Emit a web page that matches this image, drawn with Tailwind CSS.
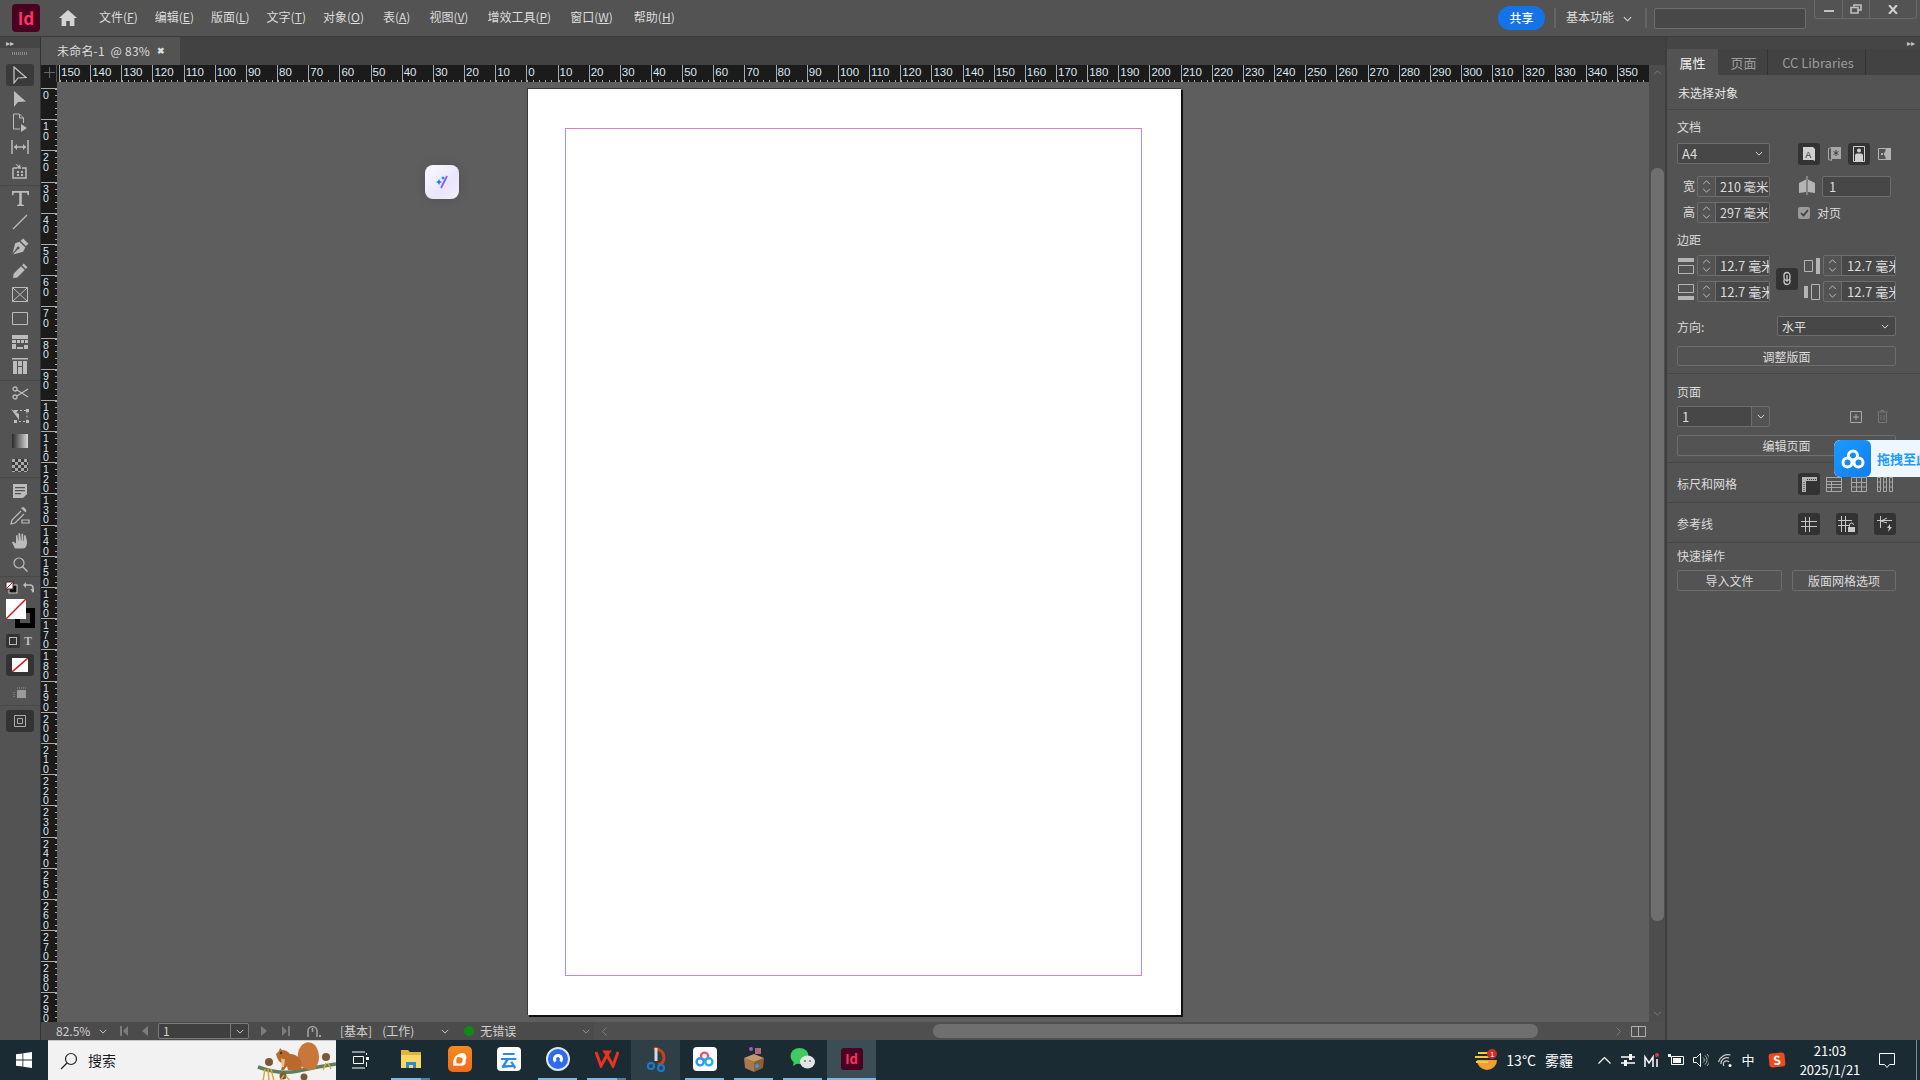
<!DOCTYPE html>
<html lang="zh-CN">
<head>
  <meta charset="UTF-8" />
  <title>InDesign</title>
  <script src="https://cdn.jsdelivr.net/npm/@tailwindcss/browser@4"></script>
</head>

<body class="flex h-[1080px] w-[1920px] flex-col overflow-hidden bg-[#535353] font-['Noto_Sans_CJK_SC',sans-serif] text-[12px] text-[#dcdcdc]">

  <!-- shared small icons -->
  <svg class="hidden">
    <symbol id="chev-d" viewBox="0 0 10 6"><path d="M1 1l4 4 4-4" fill="none" stroke="currentColor" stroke-width="1.2"/></symbol>
    <symbol id="chev-u" viewBox="0 0 10 6"><path d="M1 5l4-4 4 4" fill="none" stroke="currentColor" stroke-width="1.2"/></symbol>
  </svg>

  <!-- Barra de menu -->
  <header class="flex h-[37px] shrink-0 items-center border-b border-[#3a3a3a] bg-[#535353] pl-[12px] pr-[3px]">
    <div class="flex h-[28px] w-[28px] items-center justify-center rounded-[4px] bg-[#49021f] text-[17px] font-bold text-[#ff3366]">Id</div>
    <svg class="ml-[19px] h-[16px] w-[18px] text-[#d4d4d4]" viewBox="0 0 18 16"><path fill="currentColor" d="M9 0L0 8h2.6v8h4.6v-5h3.6v5h4.6V8H18z"/></svg>
    <nav class="ml-[22px] flex gap-[17px] whitespace-nowrap pb-[2px]">
      <span>文件(<u>F</u>)</span>
      <span>编辑(<u>E</u>)</span>
      <span>版面(<u>L</u>)</span>
      <span>文字(<u>T</u>)</span>
      <span>对象(<u>O</u>)</span>
      <span class="ml-[2px]">表(<u>A</u>)</span>
      <span class="ml-[2px]">视图(<u>V</u>)</span>
      <span class="ml-[2px]">增效工具(<u>P</u>)</span>
      <span class="ml-[2px]">窗口(<u>W</u>)</span>
      <span class="ml-[4px]">帮助(<u>H</u>)</span>
    </nav>
    <button class="ml-auto h-[24px] w-[47px] rounded-full bg-[#1473e6] text-[12px] font-medium text-white">共享</button>
    <div class="ml-[9px] h-[20px] w-[2px] bg-[#666]"></div>
    <span class="mb-[3px] ml-[10px]">基本功能</span>
    <svg class="ml-[9px] mt-[2px] h-[6px] w-[9px]"><use href="#chev-d"/></svg>
    <div class="ml-[13px] h-[20px] w-[2px] bg-[#666]"></div>
    <div class="ml-[7px] h-[21px] w-[152px] rounded-[2px] border border-[#6e6e6e] bg-[#484848]"></div>
    <div class="ml-[8px] flex h-[19px] self-start rounded-b-[3px] border border-t-0 border-[#6a6a6a]">
      <div class="flex w-[28px] items-center justify-center border-r border-[#6a6a6a]"><div class="mt-[4px] h-[2px] w-[10px] bg-[#c0c0c0]"></div></div>
      <div class="flex w-[27px] items-center justify-center border-r border-[#6a6a6a]">
        <svg class="h-[10px] w-[12px]" viewBox="0 0 12 10"><path fill="none" stroke="#c0c0c0" stroke-width="1.6" d="M4 2.5V1h7v5H8.500M1 3.500h7V9H1z"/></svg>
      </div>
      <div class="flex w-[46px] items-center justify-center">
        <svg class="h-[9px] w-[10px]" viewBox="0 0 10 9"><path stroke="#d0d0d0" stroke-width="2" d="M1 0l8 9M9 0L1 9"/></svg>
      </div>
    </div>
  </header>

  <div class="flex min-h-0 flex-1">

    <!-- Herramientas -->
    <aside class="flex w-[41px] shrink-0 flex-col border-r border-[#333] bg-[#535353] text-[#bcbcbc]">
      <div class="flex h-[11px] items-center bg-[#454545] pl-[6px] text-[8px] leading-none text-[#c4c4c4]">▸▸</div>
      <div class="mx-auto mt-[4px] h-[3px] w-[16px] bg-[repeating-linear-gradient(90deg,#8a8a8a_0,#8a8a8a_1px,transparent_1px,transparent_2px)]"></div>
      <div class="mt-[8px] flex flex-col items-center">
        <div class="flex h-[24px] w-full items-center justify-center"><div class="flex h-[22px] w-[28px] items-center justify-center rounded-[3px] bg-[#3a3a3a]">
          <svg class="h-[18px] w-[14px]" viewBox="0 0 14 18"><path fill="none" stroke="#c8c8c8" stroke-width="1.200" d="M1 1v16l4-5 8-.5z"/></svg></div></div>
        <div class="flex h-[24px] items-center"><svg class="h-[18px] w-[14px]" viewBox="0 0 14 18"><path fill="currentColor" d="M1 1v16l4-5 8-.5z"/></svg></div>
        <div class="flex h-[24px] items-center"><svg class="h-[20px] w-[16px]" viewBox="0 0 16 20"><path fill="none" stroke="currentColor" d="M1.500 1h6l4 4v5M7.500 1v4h4M8 16H1.500V1"/><path fill="currentColor" d="M9 11v8l6-4z"/></svg></div>
        <div class="flex h-[24px] items-center"><svg class="h-[14px] w-[18px]" viewBox="0 0 18 14"><path fill="none" stroke="currentColor" stroke-width="1.500" d="M1 0v14M17 0v14M3 7h12"/><path fill="currentColor" d="M3 7l3-3v6zM15 7l-3-3v6z"/></svg></div>
        <div class="flex h-[27px] w-full items-center justify-center border-b border-[#484848] pb-[2px]"><svg class="h-[18px] w-[18px]" viewBox="0 0 18 18"><path fill="none" stroke="currentColor" stroke-width="1.500" d="M2 6v10h13V6h-4M6 6H2"/><path fill="currentColor" d="M6 9h2v2H6zM10 9h2v2h-2zM6 12h2v2H6zM10 12h2v2h-2zM4 1l4 3 1-2 1 5-5-1 2-1z"/></svg></div>
        <div class="flex h-[24px] items-center"><svg class="h-[15px] w-[17px]" viewBox="0 0 16 14"><path fill="currentColor" d="M0 0h16v4h-1.200l-.6-2.400H9.200v10.800l2 .6v1H4.800v-1l2-.6V1.600H1.800L1.200 4H0z"/></svg></div>
        <div class="flex h-[24px] items-center"><svg class="h-[16px] w-[16px]" viewBox="0 0 16 16"><path stroke="currentColor" stroke-width="1.300" d="M1 15L15 1"/></svg></div>
        <div class="flex h-[24px] items-center"><svg class="h-[17px] w-[17px]" viewBox="0 0 16 16"><path fill="currentColor" d="M10.500.5l5 5-2.500 2-5-5zM7 3.500l5.500 5.500-2 4L1 15.500l4.500-5a1.300 1.300 0 10-1-1L.5 14.500 3 5z"/></svg></div>
        <div class="flex h-[24px] items-center"><svg class="h-[17px] w-[17px]" viewBox="0 0 16 16"><path fill="currentColor" d="M11 1.500l3.500 3.500-1.500 1.500L9.500 3zM8.500 4l3.500 3.500L5 14.500 1 15l.5-4z"/></svg></div>
        <div class="flex h-[24px] items-center"><svg class="h-[15px] w-[16px]" viewBox="0 0 16 15"><path fill="none" stroke="currentColor" d="M.5.500h15v14H.5zM.5.500l15 14M15.500.500l-15 14"/></svg></div>
        <div class="flex h-[24px] items-center"><svg class="h-[13px] w-[16px]" viewBox="0 0 16 13"><path fill="none" stroke="currentColor" d="M.5.500h15v12H.5z"/></svg></div>
        <div class="flex h-[24px] items-center"><svg class="h-[14px] w-[16px]" viewBox="0 0 16 14"><path fill="currentColor" d="M0 0h16v4H0zM0 5h4v3H0zM5 5h3v3H5zM9 5h3v3H9zM13 5h3v3h-3zM0 9h4v5H0zM12 10h4v4h-4zM5 12h6v2H5z"/></svg></div>
        <div class="flex h-[27px] w-full items-center justify-center border-b border-[#484848] pb-[3px]"><svg class="h-[16px] w-[16px]" viewBox="0 0 16 16"><path fill="currentColor" d="M0 0h16v1.500H0zM1 3h4v13H1zM6 3h4v5H6zM11 3h4v13h-4zM6 9h4v7H6z"/></svg></div>
        <div class="flex h-[24px] items-center"><svg class="h-[14px] w-[17px]" viewBox="0 0 17 14"><circle cx="3" cy="3" r="2" fill="none" stroke="currentColor" stroke-width="1.300"/><circle cx="3" cy="11" r="2" fill="none" stroke="currentColor" stroke-width="1.300"/><path stroke="currentColor" stroke-width="1.300" d="M5 4l11 7M5 10l11-7"/></svg></div>
        <div class="flex h-[24px] items-center"><svg class="h-[16px] w-[19px]" viewBox="0 0 19 16"><path fill="currentColor" d="M0 0l8 5v6z"/><path fill="none" stroke="currentColor" stroke-dasharray="2 2" d="M5 1.500h11v11H5"/><path fill="currentColor" d="M3 1h3v2H3zM15 0h3v3h-3zM15 11h3v3h-3zM3 11h3v3H3z"/></svg></div>
        <div class="flex h-[24px] items-center"><div class="h-[14px] w-[16px] bg-[linear-gradient(90deg,#2a2a2a,#d8d8d8)]"></div></div>
        <div class="flex h-[25px] w-full items-center justify-center border-b border-[#484848]"><div class="h-[13px] w-[16px] bg-[conic-gradient(#3a3a3a_25%,#aaa_0_50%,#3a3a3a_0_75%,#aaa_0)] bg-size-[6px_6px]"></div></div>
        <div class="flex h-[26px] items-center"><svg class="h-[14px] w-[15px]" viewBox="0 0 15 14"><path fill-rule="evenodd" fill="currentColor" d="M0 0h14v10l-4 4H0zM2 3v1.200h10V3zM2 6v1.200h10V6zM2 9v1.200h6V9z"/></svg></div>
        <div class="flex h-[24px] items-center"><svg class="h-[18px] w-[20px]" viewBox="0 0 20 18"><path fill="currentColor" d="M11 1l2.500-1 3 3-1 2.500z"/><path fill="none" stroke="currentColor" stroke-width="1.200" d="M11 4L2 13l-1 4 4-1 9-9M12 13h7v3h-7z"/></svg></div>
        <div class="flex h-[24px] items-center"><svg class="h-[17px] w-[16px]" viewBox="0 0 16 16"><path fill="currentColor" d="M3 16l-3-6 1-1 3 2V3l1.500-.500L6 8h.500V1l1.500-.500L9 8h.500V1.500L11 1l.5 7.500h.5V3l1.500-.500L15 9c0 4-1 7-4 7z"/></svg></div>
        <div class="flex h-[25px] w-full items-center justify-center border-b border-[#484848]"><svg class="h-[15px] w-[15px]" viewBox="0 0 15 15"><circle cx="6" cy="6" r="5" fill="none" stroke="currentColor" stroke-width="1.200"/><path stroke="currentColor" stroke-width="1.500" d="M9.500 9.500l5 5"/></svg></div>
      </div>
      <!-- Relleno y trazo -->
      <div class="mt-[4px] flex items-center pl-[5px]">
        <svg class="h-[13px] w-[13px]" viewBox="0 0 13 13"><rect x="4" y="4" width="8" height="8" fill="#111" stroke="#ccc"/><rect x="1" y="1" width="7" height="7" fill="#fff" stroke="#333"/><path stroke="#e11" d="M1 8l7-7"/></svg>
        <svg class="ml-[5px] h-[11px] w-[11px]" viewBox="0 0 11 11"><path fill="none" stroke="#bbb" stroke-width="1.500" d="M1 3h6a3 3 0 013 3v4"/><path fill="#bbb" d="M3 0v6L0 3zM7.500 7h5L10 11z"/></svg>
      </div>
      <svg class="ml-[6px] mt-[5px] h-[29px] w-[29px]" viewBox="0 0 29 29">
        <rect x="11.500" y="11.500" width="15" height="15" fill="none" stroke="#000" stroke-width="5"/>
        <rect width="20" height="20" fill="#fff"/><path stroke="#e01010" stroke-width="1.500" d="M0 20L20 0"/>
      </svg>
      <div class="mt-[2px] flex h-[22px] items-center pl-[6px]">
        <div class="flex h-[14px] w-[14px] items-center justify-center rounded-[2px] bg-[#333]"><div class="h-[8px] w-[8px] border border-[#bbb]"></div></div>
        <span class="ml-[4px] font-['Liberation_Serif',serif] text-[12px] font-bold leading-none text-[#bbb]">T</span>
      </div>
      <div class="mx-auto mt-[2px] flex h-[22px] w-[28px] items-center justify-center rounded-[3px] bg-[#333]">
        <svg class="h-[14px] w-[16px]" viewBox="0 0 16 14"><rect width="16" height="14" fill="#fff"/><path stroke="#e01010" stroke-width="1.500" d="M0 14L16 0"/></svg>
      </div>
      <div class="mt-[8px] flex h-[22px] items-center justify-center border-b border-[#484848] pb-[4px]">
        <svg class="h-[12px] w-[14px]" viewBox="0 0 14 12"><path fill="#9a9a9a" d="M4 3h9v8H4z"/><path stroke="#9a9a9a" stroke-dasharray="1 1" d="M4 1h9M1 5v6"/></svg>
      </div>
      <div class="mx-auto mt-[4px] flex h-[22px] w-[28px] items-center justify-center rounded-[3px] bg-[#333]">
        <svg class="h-[12px] w-[12px]" viewBox="0 0 12 12"><path fill="none" stroke="#aaa" d="M.5.500h11v11H.5zM3.500 3.500h5v5h-5z"/></svg>
      </div>
    </aside>

    <!-- Zona central -->
    <main class="flex min-w-0 flex-1 flex-col">
      <div class="flex h-[28px] shrink-0 bg-[#424242]">
        <div class="flex w-[139px] items-center justify-between bg-[#535353] pl-[16px] pr-[15px] tracking-[0.2px]">
          <span class="whitespace-pre">未命名-1  @ 83%</span>
          <span class="text-[9px] font-bold">✖</span>
        </div>
      </div>

      <div class="flex min-h-0 flex-1">
        <div class="flex min-w-0 flex-1 flex-col">
          <!-- Reglas -->
          <div class="flex h-[17px] shrink-0 bg-[#1b1b1b]">
            <div class="h-[17px] w-[16px] shrink-0 border-r border-[#555] bg-[linear-gradient(#666,#666),linear-gradient(#666,#666)] bg-size-[11px_1px,1px_11px] bg-position-[3px_7px,8px_2px] bg-no-repeat"></div>
            <div id="ruler-h" class="flex min-w-0 flex-1 overflow-hidden pl-[2px]"></div>
          </div>
          <div class="flex min-h-0 flex-1">
            <div id="ruler-v" class="flex w-[16px] shrink-0 flex-col overflow-hidden bg-[#1b1b1b] pt-[6px]"></div>
            <!-- Lienzo -->
            <div class="relative min-w-0 flex-1 overflow-hidden bg-[#5e5e5e]">
              <div class="ml-[470px] mt-[6px] h-[927px] w-[654px] border-l border-t border-[#3c3c3c] bg-white pl-[37px] pt-[39px] shadow-[2px_2px_0_#111]">
                <div class="h-[848px] w-[577px] border border-x-[#a096f0] border-y-[#d67fc6]"></div>
              </div>
              <div class="absolute left-[368px] top-[83px] flex h-[34px] w-[34px] items-center justify-center rounded-[8px] bg-[linear-gradient(135deg,#fbfbff,#e9e6fb_60%,#f6eef8)] shadow-[0_0_12px_rgba(0,0,0,0.12)]">
                <svg class="h-[14px] w-[14px]" viewBox="0 0 14 14"><path stroke="#8a5cf0" stroke-width="1.800" d="M12 1L6 13"/><path fill="#0a84ff" d="M4 4l1 2 2 1-2 1-1 2-1-2-2-1 2-1zM8 1l.7 1.300L10 3l-1.300.7L8 5l-.7-1.300L6 3l1.300-.7z"/></svg>
              </div>
            </div>
          </div>
        </div>
        <!-- Barra vertical -->
        <div class="flex w-[16px] shrink-0 flex-col items-center bg-[#4d4d4d] text-[#7c7c7c]">
          <svg class="mt-[5px] h-[5px] w-[9px]"><use href="#chev-u"/></svg>
          <div class="mt-[93px] h-[753px] w-[13px] rounded-[6px] bg-[#6f6f6f]"></div>
          <svg class="mb-[6px] mt-auto h-[5px] w-[9px]"><use href="#chev-d"/></svg>
        </div>
      </div>

      <!-- Barra de estado -->
      <div class="flex h-[18px] shrink-0 items-center bg-[#4b4b4b] text-[#cfcfcf]">
        <span class="ml-[15px] w-[37px]">82.5%</span>
        <svg class="ml-[6px] h-[5px] w-[8px]"><use href="#chev-d"/></svg>
        <svg class="ml-[13px] h-[10px] w-[8px] text-[#7c7c7c]" viewBox="0 0 8 10"><path fill="currentColor" d="M0 0h2v10H0zM8 0v10L3 5z"/></svg>
        <svg class="ml-[14px] h-[10px] w-[6px] text-[#7c7c7c]" viewBox="0 0 6 10"><path fill="currentColor" d="M6 0v10L0 5z"/></svg>
        <div class="ml-[10px] flex h-[16px] w-[91px] rounded-[2px] border border-[#7a7a7a] bg-[#3f3f3f]">
          <span class="flex-1 pl-[4px] leading-[14px]">1</span>
          <div class="flex w-[18px] items-center justify-center border-l border-[#7a7a7a]"><svg class="h-[5px] w-[8px]"><use href="#chev-d"/></svg></div>
        </div>
        <svg class="ml-[12px] h-[10px] w-[6px] text-[#7c7c7c]" viewBox="0 0 6 10"><path fill="currentColor" d="M0 0v10l6-5z"/></svg>
        <svg class="ml-[15px] h-[10px] w-[8px] text-[#7c7c7c]" viewBox="0 0 8 10"><path fill="currentColor" d="M6 0h2v10H6zM0 0v10l5-5z"/></svg>
        <svg class="ml-[17px] h-[12px] w-[14px] text-[#a0a0a0]" viewBox="0 0 14 12"><path fill="none" stroke="currentColor" stroke-width="1.600" d="M1 12V6a4.500 4.500 0 019 0v6M5.500 3v4"/><path fill="currentColor" d="M12 10h2v2h-2z"/></svg>
        <span class="ml-[19px] whitespace-nowrap">[基本]</span>
        <span class="ml-[10px] whitespace-nowrap">(工作)</span>
        <svg class="ml-[27px] h-[5px] w-[8px]"><use href="#chev-d"/></svg>
        <div class="ml-[15px] h-[10px] w-[10px] rounded-full bg-[#0e8a16]"></div>
        <span class="ml-[6px] whitespace-nowrap">无错误</span>
        <svg class="ml-[66px] h-[5px] w-[8px] text-[#9a9a9a]"><use href="#chev-d"/></svg>
        <!-- Barra horizontal -->
        <div class="ml-[4px] flex h-full flex-1 items-center bg-[#4f4f4f] text-[#7c7c7c]">
          <svg class="ml-[8px] h-[9px] w-[5px]" viewBox="0 0 5 9"><path fill="none" stroke="currentColor" d="M4.500.500L.500 4.500l4 4"/></svg>
          <div class="ml-[326px] h-[14px] w-[605px] rounded-[7px] bg-[#6f6f6f]"></div>
          <svg class="ml-[78px] h-[9px] w-[5px]" viewBox="0 0 5 9"><path fill="none" stroke="currentColor" d="M.500.500l4 4-4 4"/></svg>
          <svg class="ml-[10px] h-[11px] w-[15px] text-[#b0b0b0]" viewBox="0 0 15 11"><path fill="none" stroke="currentColor" d="M.5.500h14v10H.5zM7.500.500v10"/></svg>
        </div>
      </div>
    </main>

    <!-- Panel derecho -->
    <aside class="relative w-[255px] shrink-0 border-l-2 border-[#3e3e3e] bg-[#535353]">
      <div class="flex h-[12px] items-center justify-end bg-[#454545] pr-[5px] text-[8px] leading-none text-[#c4c4c4]">▸▸</div>
      <div class="flex h-[26px] bg-[#424242]">
        <div class="flex w-[51px] items-center justify-center bg-[#535353] pt-[2px] text-[13px] text-[#f0f0f0]">属性</div>
        <div class="flex w-[50px] items-center justify-center border-r border-[#333] pl-[2px] pt-[2px] text-[13px] text-[#9c9c9c]">页面</div>
        <div class="flex w-[98px] items-center justify-center border-r border-[#333] pl-[3px] pt-[2px] text-[13px] text-[#9c9c9c]">CC Libraries</div>
      </div>

      <div class="flex h-[35px] items-center border-b border-[#474747] pl-[11px] pt-[2px] text-[#e6e6e6]">未选择对象</div>

      <!-- Documento -->
      <section class="h-[264px] border-b border-[#474747] pl-[10px] pt-[9px]">
        <div class="h-[16px] leading-[16px]">文档</div>
        <div class="mt-[8px] flex items-start">
          <div class="flex h-[21px] w-[93px] items-center justify-between rounded-[2px] border border-[#6e6e6e] bg-[#474747] pl-[4px] pr-[6px] text-[13px]">A4<svg class="h-[5px] w-[8px]"><use href="#chev-d"/></svg></div>
          <div class="ml-[28px] flex gap-[3px]">
            <div class="flex h-[22px] w-[22px] items-center justify-center rounded-[3px] bg-[#333]"><svg class="h-[14px] w-[12px]" viewBox="0 0 12 14"><path fill="#d0d0d0" d="M0 0h10l2 2v12l-2-1H0z"/><text x="2.300" y="10.500" font-size="9" font-family="Liberation Sans" fill="#222">A</text></svg></div>
            <div class="flex h-[22px] w-[22px] items-center justify-center"><svg class="h-[14px] w-[13px]" viewBox="0 0 13 14"><path fill="#a6a6a6" d="M3 0h10v12H3z"/><path fill="none" stroke="#a6a6a6" d="M.5 1.500l3-1v13l-3-1z"/><path stroke="#444" d="M8 3v6M5.500 4.500l5 3M10.500 4.500l-5 3"/></svg></div>
            <div class="flex h-[22px] w-[22px] items-center justify-center rounded-[3px] bg-[#333]"><svg class="h-[16px] w-[12px]" viewBox="0 0 12 16"><path fill="none" stroke="#d0d0d0" d="M.5.500h11v15H.5z"/><circle cx="6" cy="4.500" r="2" fill="#d0d0d0"/><path fill="#d0d0d0" d="M2 15V9.500a2 2 0 012-2h4a2 2 0 012 2V15z"/></svg></div>
            <div class="flex h-[22px] w-[22px] items-center justify-center"><svg class="h-[12px] w-[13px]" viewBox="0 0 13 12"><path fill="none" stroke="#b4b4b4" d="M.5.500h12v11H.5z"/><path fill="#b4b4b4" d="M8 0h5v12H8l-1-4.500h-1v-3h1zM3 5h2v2H3z"/></svg></div>
          </div>
        </div>
        <div class="mt-[11px] flex items-start">
          <div class="w-[20px] pl-[6px] leading-[19px]">宽</div>
          <div class="flex h-[21px] w-[73px] rounded-[2px] border border-[#6e6e6e]">
            <div class="flex w-[18px] flex-col items-center justify-center gap-[3px] border-r border-[#6e6e6e] text-[#bbb]"><svg class="h-[5px] w-[9px]"><use href="#chev-u"/></svg><svg class="h-[5px] w-[9px]"><use href="#chev-d"/></svg></div>
            <div class="flex-1 overflow-hidden whitespace-nowrap bg-[#474747] pl-[4px] text-[12.5px] leading-[19px]">210 毫米</div>
          </div>
          <svg class="ml-[28px] h-[19px] w-[18px]" viewBox="0 0 18 19"><path fill="#b4b4b4" d="M8 3.500V16l-7 1V7zM10 3.500V16l7 1V7z"/><path stroke="#b4b4b4" d="M9 0v19"/></svg>
          <div class="ml-[6px] h-[21px] w-[69px] rounded-[2px] border border-[#6e6e6e] bg-[#474747] pl-[6px] text-[13px] leading-[19px]">1</div>
        </div>
        <div class="mt-[5px] flex items-start">
          <div class="w-[20px] pl-[6px] leading-[19px]">高</div>
          <div class="flex h-[21px] w-[73px] rounded-[2px] border border-[#6e6e6e]">
            <div class="flex w-[18px] flex-col items-center justify-center gap-[3px] border-r border-[#6e6e6e] text-[#bbb]"><svg class="h-[5px] w-[9px]"><use href="#chev-u"/></svg><svg class="h-[5px] w-[9px]"><use href="#chev-d"/></svg></div>
            <div class="flex-1 overflow-hidden whitespace-nowrap bg-[#474747] pl-[4px] text-[12.5px] leading-[19px]">297 毫米</div>
          </div>
          <div class="ml-[28px] mt-[5px] flex h-[12px] w-[12px] items-center justify-center rounded-[2px] bg-[#9a9a9a]"><svg class="h-[8px] w-[9px]" viewBox="0 0 9 8"><path fill="none" stroke="#3a3a3a" stroke-width="1.600" d="M1 4l2.500 2.500L8 1"/></svg></div>
          <span class="ml-[7px] mt-[2px] leading-[18px]">对页</span>
        </div>

        <div class="mt-[9px] h-[16px] leading-[16px]">边距</div>
        <div class="mt-[7px] flex items-center">
          <div class="flex flex-col gap-[5px]">
            <div class="flex items-center">
              <svg class="ml-[1px] h-[16px] w-[16px]" viewBox="0 0 16 16"><path fill="#b4b4b4" d="M0 0h16v4H0z"/><path fill="none" stroke="#b4b4b4" d="M.5 7.500h15v8H.5z"/></svg>
              <div class="ml-[3px] flex h-[21px] w-[73px] rounded-[2px] border border-[#6e6e6e]">
                <div class="flex w-[18px] flex-col items-center justify-center gap-[3px] border-r border-[#6e6e6e] text-[#bbb]"><svg class="h-[5px] w-[9px]"><use href="#chev-u"/></svg><svg class="h-[5px] w-[9px]"><use href="#chev-d"/></svg></div>
                <div class="flex-1 overflow-hidden whitespace-nowrap bg-[#474747] pl-[4px] text-[13px] leading-[19px]">12.7 毫米</div>
              </div>
            </div>
            <div class="flex items-center">
              <svg class="ml-[1px] h-[16px] w-[16px]" viewBox="0 0 16 16"><path fill="none" stroke="#b4b4b4" d="M.5.500h15v8H.5z"/><path fill="#b4b4b4" d="M0 12h16v4H0z"/></svg>
              <div class="ml-[3px] flex h-[21px] w-[73px] rounded-[2px] border border-[#6e6e6e]">
                <div class="flex w-[18px] flex-col items-center justify-center gap-[3px] border-r border-[#6e6e6e] text-[#bbb]"><svg class="h-[5px] w-[9px]"><use href="#chev-u"/></svg><svg class="h-[5px] w-[9px]"><use href="#chev-d"/></svg></div>
                <div class="flex-1 overflow-hidden whitespace-nowrap bg-[#474747] pl-[4px] text-[13px] leading-[19px]">12.7 毫米</div>
              </div>
            </div>
          </div>
          <div class="ml-[6px] flex h-[22px] w-[22px] items-center justify-center rounded-[3px] bg-[#333]"><svg class="h-[15px] w-[8px]" viewBox="0 0 8 15"><path fill="none" stroke="#c8c8c8" stroke-width="1.300" d="M1 4.500a3 3 0 016 0v2a3 3 0 01-6 0zM1 8.500v2a3 3 0 006 0v-2M4 4v7"/></svg></div>
          <div class="ml-[6px] flex flex-col gap-[5px]">
            <div class="flex items-center">
              <svg class="h-[16px] w-[16px]" viewBox="0 0 16 16"><path fill="none" stroke="#b4b4b4" d="M.5 2.500h8v11h-8z"/><path fill="#b4b4b4" d="M12 0h4v16h-4z"/></svg>
              <div class="ml-[3px] flex h-[21px] w-[73px] rounded-[2px] border border-[#6e6e6e]">
                <div class="flex w-[18px] flex-col items-center justify-center gap-[3px] border-r border-[#6e6e6e] text-[#bbb]"><svg class="h-[5px] w-[9px]"><use href="#chev-u"/></svg><svg class="h-[5px] w-[9px]"><use href="#chev-d"/></svg></div>
                <div class="flex-1 overflow-hidden whitespace-nowrap bg-[#474747] pl-[5px] text-[13px] leading-[19px]">12.7 毫米</div>
              </div>
            </div>
            <div class="flex items-center">
              <svg class="h-[16px] w-[16px]" viewBox="0 0 16 16"><path fill="#b4b4b4" d="M0 2h4v12H0z"/><path fill="none" stroke="#b4b4b4" d="M7.500.500h8v15h-8z"/></svg>
              <div class="ml-[3px] flex h-[21px] w-[73px] rounded-[2px] border border-[#6e6e6e]">
                <div class="flex w-[18px] flex-col items-center justify-center gap-[3px] border-r border-[#6e6e6e] text-[#bbb]"><svg class="h-[5px] w-[9px]"><use href="#chev-u"/></svg><svg class="h-[5px] w-[9px]"><use href="#chev-d"/></svg></div>
                <div class="flex-1 overflow-hidden whitespace-nowrap bg-[#474747] pl-[5px] text-[13px] leading-[19px]">12.7 毫米</div>
              </div>
            </div>
          </div>
        </div>
        <div class="mt-[14px] flex h-[20px] items-center">
          <span class="w-[100px] pt-[2px]">方向:</span>
          <div class="flex h-[20px] w-[119px] items-center justify-between rounded-[2px] border border-[#6e6e6e] bg-[#474747] pl-[4px] pr-[6px] pt-[1px]">水平<svg class="h-[5px] w-[8px]"><use href="#chev-d"/></svg></div>
        </div>
        <button class="mt-[10px] h-[20px] w-[219px] rounded-[2px] border border-[#6e6e6e] pt-[1px] leading-[18px]">调整版面</button>
      </section>

      <!-- Páginas -->
      <section class="h-[89px] border-b border-[#474747] pl-[10px] pt-[10px]">
        <div class="h-[16px] leading-[16px]">页面</div>
        <div class="mt-[6px] flex items-center">
          <div class="flex h-[21px] w-[93px] rounded-[2px] border border-[#6e6e6e]">
            <span class="flex-1 bg-[#474747] pl-[4px] text-[13px] leading-[19px]">1</span>
            <div class="flex w-[18px] items-center justify-center border-l border-[#6e6e6e]"><svg class="h-[5px] w-[8px]"><use href="#chev-d"/></svg></div>
          </div>
          <svg class="ml-[80px] h-[12px] w-[12px]" viewBox="0 0 12 12"><path fill="none" stroke="#a8a8a8" d="M.5.500h11v11H.5z"/><path stroke="#a8a8a8" d="M6 3v6M3 6h6"/></svg>
          <svg class="ml-[15px] h-[13px] w-[11px] text-[#777]" viewBox="0 0 11 13"><path fill="none" stroke="currentColor" d="M1.500 3v9.500h8V3M0 2h11M4 2V.5h3V2M4 5v5M7 5v5"/></svg>
        </div>
        <button class="mt-[8px] h-[21px] w-[219px] rounded-[2px] border border-[#6e6e6e] leading-[19px]">编辑页面</button>
      </section>

      <!-- Reglas y cuadrículas -->
      <section class="flex h-[40px] items-center border-b border-[#474747] pl-[10px] pt-[3px]">
        <span class="w-[121px]">标尺和网格</span>
        <div class="flex h-[22px] w-[22px] items-center justify-center rounded-[3px] bg-[#333]"><svg class="h-[15px] w-[15px]" viewBox="0 0 15 15"><path fill="#b4b4b4" d="M0 0h15v4H4v11H0z"/><path stroke="#333" stroke-dasharray="1 1" d="M5 2.500h10M2 5v10"/></svg></div>
        <svg class="ml-[6px] h-[15px] w-[16px]" viewBox="0 0 16 15"><path fill="none" stroke="#a8a8a8" d="M.5.500h15v14H.5zM.5 4.500h15M.5 7.500h15M.5 10.500h15M5.500 4.500v10"/></svg>
        <svg class="ml-[9px] h-[15px] w-[16px]" viewBox="0 0 16 15"><path fill="none" stroke="#a8a8a8" d="M.5.500h15v14H.5zM.5 5.500h15M.5 10h15M5.500.5v14M10.500.5v14"/></svg>
        <svg class="ml-[10px] h-[15px] w-[16px]" viewBox="0 0 16 15"><path fill="none" stroke="#a8a8a8" d="M.5.500h3v14h-3zM6.500.500h3v14h-3zM12.500.500h3v14h-3zM.5 5h3M.5 10h3M6.500 5h3M6.500 10h3M12.500 5h3M12.500 10h3"/></svg>
      </section>

      <!-- Guías -->
      <section class="flex h-[40px] items-center border-b border-[#474747] pl-[10px] pt-[3px]">
        <span class="w-[121px]">参考线</span>
        <div class="flex h-[22px] w-[22px] items-center justify-center rounded-[3px] bg-[#333]"><svg class="h-[15px] w-[16px]" viewBox="0 0 16 15"><path stroke="#c8c8c8" d="M4.500 0v15M8.500 0v15M0 4.500h16M0 9.500h16"/></svg></div>
        <div class="ml-[16px] flex h-[22px] w-[22px] items-center justify-center rounded-[3px] bg-[#333]"><svg class="h-[16px] w-[18px]" viewBox="0 0 18 16"><path stroke="#c8c8c8" d="M3.500 0v16M7.500 0v16M0 4.500h14M0 9.500h11"/><path fill="#c8c8c8" d="M10 11h7v5h-7z"/><path fill="none" stroke="#c8c8c8" d="M11.500 11V9a2 2 0 014 0"/></svg></div>
        <div class="ml-[16px] flex h-[22px] w-[22px] items-center justify-center rounded-[3px] bg-[#333]"><svg class="h-[16px] w-[17px]" viewBox="0 0 17 16"><path stroke="#c8c8c8" d="M3.500 0v12M0 4.500h15M4 5l6-3M4 5l6 2"/><path fill="#c8c8c8" d="M13 8l-3 4h2l-1 4 4-5h-2z"/></svg></div>
      </section>

      <!-- Acciones rápidas -->
      <section class="pl-[10px] pt-[5px]">
        <div class="h-[16px] leading-[16px]">快速操作</div>
        <div class="mt-[6px] flex gap-[10px]">
          <button class="h-[21px] w-[105px] rounded-[2px] border border-[#6e6e6e] leading-[19px]">导入文件</button>
          <button class="h-[21px] w-[104px] rounded-[2px] border border-[#6e6e6e] leading-[19px]">版面网格选项</button>
        </div>
      </section>

      <!-- Aviso de arrastre -->
      <div class="absolute left-[167px] top-[403px] flex h-[37px] w-[88px] overflow-hidden rounded-l-[6px] bg-[#eef7ff]">
        <div class="flex w-[37px] shrink-0 items-center justify-center rounded-[6px] bg-[linear-gradient(135deg,#1c9bff,#0f7df0)]">
          <svg class="h-[20px] w-[24px]" viewBox="0 0 24 20"><g fill="none" stroke="#fff" stroke-width="3"><circle cx="12" cy="6.500" r="4.500"/><circle cx="6.500" cy="13.500" r="4.500"/><circle cx="17.500" cy="13.500" r="4.500"/></g></svg>
        </div>
        <span class="ml-[6px] whitespace-nowrap text-[13px] font-bold leading-[37px] text-[#1c9bff]">拖拽至此</span>
      </div>
    </aside>
  </div>

  <!-- Barra de tareas -->
  <footer class="flex h-[40px] shrink-0 bg-[#1a2b33] text-white">
    <div class="flex w-[48px] items-center justify-center">
      <svg class="h-[16px] w-[16px]" viewBox="0 0 16 16"><path fill="#fff" d="M0 2.300l6.500-.9v6.200H0zM7.300 1.300L16 0v7.600H7.300zM0 8.400h6.500v6.200L0 13.700zM7.300 8.400H16V16l-8.700-1.300z"/></svg>
    </div>
    <div class="relative flex w-[288px] items-center overflow-hidden border-t border-[#c8c8c8] bg-[#f2f2f2] pl-[12px] text-[14px] text-[#1a1a1a]">
      <svg class="h-[18px] w-[18px]" viewBox="0 0 18 18"><circle cx="11" cy="7" r="5.500" fill="none" stroke="#222" stroke-width="1.200"/><path stroke="#222" stroke-width="1.300" d="M7 11l-6 6"/></svg>
      <span class="ml-[10px]">搜索</span>
      <!-- ardilla sobre la rama -->
      <svg class="absolute right-0 top-0 h-[40px] w-[80px]" viewBox="0 0 80 40">
        <path d="M2 26q22 8 40 4t38-7" fill="none" stroke="#5f7f5c" stroke-width="3.500"/>
        <path fill="#c9763a" d="M46 26q-8-12-1-21 7-7 14-1 8 12 0 24-6 3-13-2z"/>
        <path fill="#b86a2c" d="M20 13l3-3 1-3 2 2q5 0 8 4 6 0 10 5 3 5 1 11H32l-1-4-3 4h-3l2-7q-5 0-7-9z"/>
        <path fill="#e8c090" d="M25 17q2 2 4 1l-1 8h-2z"/>
        <circle cx="25" cy="12" r="1" fill="#222"/>
        <g fill="#7a5a36"><circle cx="13" cy="21" r="4"/><circle cx="27" cy="35" r="3.500"/><circle cx="70" cy="16" r="4"/><circle cx="48" cy="36" r="3.500"/></g>
        <g stroke="#d9a93a" stroke-width="1.500"><path d="M9 28l-2 12M12 28l1 12M15 28l3 12M28 34l-4 6M30 35l4 5M70 22l-3 7M72 22l3 6"/></g>
      </svg>
    </div>
    <div class="flex w-[48px] items-center justify-center">
      <svg class="h-[18px] w-[18px]" viewBox="0 0 18 18"><path fill="none" stroke="#fff" d="M1 1h13M1 17h13M2.500 5.500h10v7h-10z"/><path fill="#fff" d="M15 6h3v3h-3zM15 2h1v2h-1zM15 11h1v5h-1z"/></svg>
    </div>
    <div class="ml-[2px] flex">
      <div class="flex w-[49px] flex-col">
        <div class="flex flex-1 items-center justify-center"><svg class="h-[22px] w-[22px]" viewBox="0 0 22 22"><path fill="#e2b33a" d="M1 2h7l2 2h11v16H1z"/><path fill="#fbd866" d="M1 7h20v13H1z"/><path fill="#2c8ad8" d="M6 20v-6h10v6h-3v-3H9v3z"/></svg></div>
        <div class="mx-[5px] flex h-[2px]"><div class="flex-1 bg-[#76b9ed]"></div><div class="w-[9px] bg-[#4f7f9f]"></div></div>
      </div>
      <div class="flex w-[49px] flex-col pb-[2px]">
        <div class="flex flex-1 items-center justify-center"><div class="flex h-[26px] w-[24px] items-center justify-center rounded-[5px] bg-[linear-gradient(#f58a1f,#f26a1b)]"><svg class="h-[18px] w-[18px]" viewBox="0 0 16 16"><path fill="#fff" d="M2 14q-1-7 4-10 3-2 6-1 3 3 1 6 1 4-3 5zM6 6q-2 2-1 6h4q2-2 1-5z"/></svg></div></div>
      </div>
      <div class="flex w-[49px] flex-col pb-[2px]">
        <div class="flex flex-1 items-center justify-center"><div class="flex h-[24px] w-[24px] items-center justify-center rounded-[4px] bg-white text-[17px] font-bold leading-none text-[#2a8ae8]">云</div></div>
      </div>
      <div class="flex w-[49px] flex-col">
        <div class="flex flex-1 items-center justify-center"><div class="flex h-[24px] w-[24px] items-center justify-center rounded-full border-2 border-[#dfe6f2] bg-[#2d6bf0]"><div class="h-[10px] w-[10px] rounded-full border-[3px] border-white border-b-transparent"></div></div></div>
        <div class="mx-[5px] h-[2px] bg-[#76b9ed]"></div>
      </div>
      <div class="flex w-[49px] flex-col">
        <div class="flex flex-1 items-center justify-center"><svg class="h-[18px] w-[24px]" viewBox="0 0 24 18"><path fill="none" stroke="#e8341c" stroke-width="3" d="M1 2l5 14 6-11 6 11 5-14M12 5l-2-3h4z"/></svg></div>
        <div class="mx-[5px] flex h-[2px]"><div class="flex-1 bg-[#76b9ed]"></div><div class="w-[9px] bg-[#4f7f9f]"></div></div>
      </div>
      <div class="flex w-[49px] flex-col bg-[#2f3f47] pb-[2px]">
        <div class="flex flex-1 items-center justify-center"><svg class="h-[26px] w-[20px]" viewBox="0 0 20 26"><path fill="none" stroke="#c8401c" stroke-width="3" d="M8 2q10 2 10 9t-6 8"/><path stroke="#d8d8d8" stroke-width="3" d="M10 2v13"/><circle cx="5" cy="20" r="3" fill="none" stroke="#1c78c8" stroke-width="2.200"/><circle cx="15" cy="22" r="3" fill="none" stroke="#1c78c8" stroke-width="2.200"/></svg></div>
      </div>
      <div class="flex w-[49px] flex-col">
        <div class="flex flex-1 items-center justify-center"><div class="flex h-[24px] w-[24px] items-center justify-center rounded-[4px] bg-white"><svg class="h-[16px] w-[19px]" viewBox="0 0 24 20"><g fill="none" stroke-width="3"><circle cx="12" cy="6.500" r="4.500" stroke="#f0506e"/><circle cx="6.500" cy="13.500" r="4.500" stroke="#2a9af0"/><circle cx="17.500" cy="13.500" r="4.500" stroke="#26b0e8"/></g></svg></div></div>
        <div class="mx-[5px] h-[2px] bg-[#76b9ed]"></div>
      </div>
      <div class="flex w-[49px] flex-col">
        <div class="flex flex-1 items-center justify-center"><svg class="h-[26px] w-[24px]" viewBox="0 0 24 26"><path fill="#a9794a" d="M2 12l10 4v10L3 22z"/><path fill="#8a5f38" d="M22 12l-10 4v10l9-4z"/><path fill="#c4986a" d="M2 12l10-4 10 4-10 4z"/><rect x="13" y="2" width="6" height="6" fill="#b06a7a"/><circle cx="9" cy="3" r="2" fill="#9a5ad0"/><circle cx="15" cy="20" r="2" fill="#3a9ae0"/></svg></div>
        <div class="mx-[5px] h-[2px] bg-[#76b9ed]"></div>
      </div>
      <div class="flex w-[49px] flex-col">
        <div class="flex flex-1 items-center justify-center"><svg class="h-[24px] w-[25px]" viewBox="0 0 25 24"><ellipse cx="9.500" cy="9" rx="9" ry="8" fill="#3ecb60"/><path fill="#3ecb60" d="M4 14l-1 5 5-3z"/><ellipse cx="17.500" cy="15" rx="7.500" ry="6.500" fill="#e4e4e4"/><circle cx="15" cy="14" r="1" fill="#777"/><circle cx="20" cy="14" r="1" fill="#777"/></svg></div>
        <div class="mx-[5px] h-[2px] bg-[#76b9ed]"></div>
      </div>
      <div class="flex w-[49px] flex-col bg-[#3d4d56]">
        <div class="flex flex-1 items-center justify-center"><div class="flex h-[22px] w-[22px] items-center justify-center rounded-[3px] bg-[#49021f] text-[13px] font-bold text-[#ff3366]">Id</div></div>
        <div class="h-[2px] bg-[#76b9ed]"></div>
      </div>
    </div>

    <!-- Bandeja -->
    <div class="ml-auto flex items-center">
      <svg class="h-[22px] w-[24px]" viewBox="0 0 24 22"><path fill="#f0a030" d="M3 11h20a10 10 0 01-20 0z"/><path stroke="#f5c842" stroke-width="1.800" d="M4 4h10M1 8h14M2 13h12"/><circle cx="18" cy="5" r="5" fill="#d42a2a"/><text x="16" y="8" font-size="8" font-family="Liberation Sans" fill="#fff">1</text></svg>
      <span class="ml-[8px] text-[14px]">13°C</span>
      <span class="ml-[9px] text-[14px]">雾霾</span>
    </div>
    <div class="ml-[19px] flex items-center">
      <div class="flex w-[24px] justify-center"><svg class="h-[7px] w-[13px]" viewBox="0 0 13 7"><path fill="none" stroke="#fff" stroke-width="1.200" d="M.5 6.500l6-6 6 6"/></svg></div>
      <div class="flex w-[24px] justify-center"><svg class="h-[12px] w-[14px]" viewBox="0 0 14 12"><path stroke="#fff" stroke-width="1.500" d="M0 3h14M0 9h14"/><path fill="#fff" d="M8 0h3v6H8zM3 6h3v6H3z"/></svg></div>
      <div class="flex w-[23px] justify-center"><svg class="h-[14px] w-[16px]" viewBox="0 0 16 14"><path stroke="#fff" stroke-width="1.500" fill="none" d="M1 14V4l4 6 4-6v10M13 6v8"/><circle cx="13" cy="2" r="2" fill="#e03a3a"/></svg></div>
      <div class="flex w-[26px] justify-center"><svg class="h-[12px] w-[16px]" viewBox="0 0 16 12"><path fill="none" stroke="#fff" d="M3.500 2.500h12v8h-12z"/><path fill="#fff" d="M5 4h8v5H5zM0 0h3v3H0z"/></svg></div>
      <div class="flex w-[23px] justify-center"><svg class="h-[14px] w-[16px]" viewBox="0 0 16 14"><path fill="none" stroke="#fff" d="M.5 4.500h3l4-4v13l-4-4h-3z"/><path fill="none" stroke="#aaa" d="M10 4.500a3 3 0 010 5M12 2.500a6 6 0 010 9M14 1a8 8 0 010 12"/></svg></div>
      <div class="flex w-[26px] justify-center"><svg class="h-[13px] w-[14px]" viewBox="0 0 14 13"><path fill="none" stroke="#ccc" stroke-width="1.200" d="M.5 8a10 10 0 0112-7M3 10a6 6 0 018-6M6 12a3 3 0 015-4"/><circle cx="12" cy="11.500" r="1.500" fill="#fff"/></svg></div>
      <div class="flex w-[20px] justify-center text-[13px]">中</div>
      <div class="flex w-[38px] justify-center"><div class="flex h-[14px] w-[16px] -rotate-6 items-center justify-center rounded-[3px] bg-[#ef4a1c] text-[12px] font-bold leading-none text-white">S</div></div>
      <div class="flex w-[68px] flex-col items-center text-[13px] leading-[19px]"><span>21:03</span><span>2025/1/21</span></div>
      <div class="flex w-[46px] justify-center"><svg class="h-[15px] w-[16px]" viewBox="0 0 16 15"><path fill="none" stroke="#fff" d="M.5.500h15v11h-5l-2.500 3-2.500-3h-5z"/></svg></div>
    </div>
    <div class="ml-[6px] mr-[3px] w-px bg-[#7d8d95]"></div>
  </footer>

  <script>
    // rulers: one cell per 10 mm
    const rulerH = document.getElementById('ruler-h');
    const hLabels = [];
    for (let n = 150; n > 0; n -= 10) hLabels.push(n);
    for (let n = 0; n <= 350; n += 10) hLabels.push(n);
    hLabels.forEach(n => {
      const cell = document.createElement('div');
      cell.className = "h-[17px] w-[31.17px] shrink-0 border-l border-[#aaa] bg-[repeating-linear-gradient(90deg,#aaa_0,#aaa_1px,transparent_1px,transparent_6.2px)] bg-size-[100%_2px] bg-bottom bg-no-repeat pl-[1px] font-['Liberation_Sans',sans-serif] text-[11.5px] leading-[14px] text-[#dbe6f0]";
      cell.textContent = n;
      rulerH.appendChild(cell);
    });

    const rulerV = document.getElementById('ruler-v');
    for (let n = 0; n <= 290; n += 10) {
      const cell = document.createElement('div');
      cell.className = "h-[31.2px] w-[16px] shrink-0 border-t border-[#aaa] bg-[repeating-linear-gradient(180deg,#aaa_0,#aaa_1px,transparent_1px,transparent_6.2px)] bg-size-[2px_100%] bg-right bg-no-repeat pl-[2px] pt-[2px] font-['Liberation_Sans',sans-serif] text-[10.5px] leading-[9.5px] text-[#dbe6f0]";
      String(n).split('').forEach(d => {
        const digit = document.createElement('div');
        digit.textContent = d;
        cell.appendChild(digit);
      });
      rulerV.appendChild(cell);
    }
  </script>
</body>
</html>
